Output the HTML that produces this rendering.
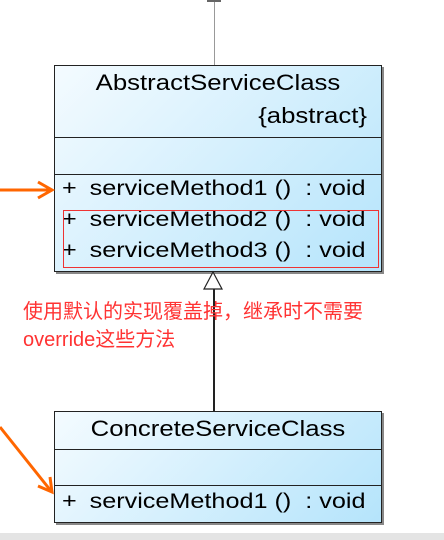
<!DOCTYPE html>
<html><head><meta charset="utf-8"><style>
body{margin:0;width:444px;height:540px;background:#fff;position:relative;overflow:hidden;font-family:"Liberation Sans",Arial,sans-serif}
.box{position:absolute;left:54px;width:326px;border:1px solid #222;background:linear-gradient(135deg,#f4fbff 0%,#b5e4fb 100%);box-shadow:2px 2px 0 #888}
.sec{border-top:1px solid #222;position:relative}
.t{position:absolute;font-size:22px;color:#000;white-space:nowrap;transform:scaleX(1.17)}
.m{position:absolute;left:7px;font-size:21px;white-space:nowrap;transform:scaleX(1.2);transform-origin:left}
.m b{font-weight:normal;display:inline-block;width:23px}
.note{position:absolute;left:23px;color:#f33;font-size:20px;font-family:"Liberation Sans","Noto Sans CJK SC",sans-serif;line-height:28px}
</style></head><body>
<div style="position:absolute;left:214px;top:0;width:1px;height:65px;background:#999"></div>
<div style="position:absolute;left:207px;top:0;width:14px;height:2px;background:#666"></div>
<div class="box" style="top:65px;height:205px">
 <div style="height:71px;position:relative">
  <div class="t" style="left:0;width:326px;text-align:center;top:4px">AbstractServiceClass</div>
  <div class="t" style="right:14px;top:37px;transform-origin:right">{abstract}</div>
 </div>
 <div class="sec" style="height:36px"></div>
 <div class="sec" style="height:96px">
  <div class="m" style="top:2px"><b>+</b>serviceMethod1 () &nbsp;: void</div>
  <div class="m" style="top:33px"><b>+</b>serviceMethod2 () &nbsp;: void</div>
  <div class="m" style="top:64px"><b>+</b>serviceMethod3 () &nbsp;: void</div>
  <div style="position:absolute;left:8px;top:35px;width:314px;height:56px;border:1px solid #e33"></div>
 </div>
</div>
<div style="position:absolute;left:213px;top:288px;width:1.5px;height:123px;background:#222"></div>
<svg style="position:absolute;left:0;top:0" width="444" height="540">
 <polygon points="213,272 204,289 222,289" fill="#fff" stroke="#222" stroke-width="1.2"/>
 <line x1="0" y1="190" x2="50" y2="190" stroke="#f60" stroke-width="3"/>
 <polyline points="38,182 52,190 38,198" fill="none" stroke="#f60" stroke-width="3"/>
 <line x1="0" y1="427" x2="51" y2="491" stroke="#f60" stroke-width="3"/>
 <polyline points="38,486 52,492 50,477" fill="none" stroke="#f60" stroke-width="3"/>
</svg>
<div class="note" style="top:298px">使用默认的实现覆盖掉，继承时不需要<br>override这些方法</div>
<div class="box" style="top:411px;height:110px">
 <div style="height:37px;position:relative"><div class="t" style="left:0;width:326px;text-align:center;top:4px">ConcreteServiceClass</div></div>
 <div class="sec" style="height:35px"></div>
 <div class="sec" style="height:36px"><div class="m" style="top:4px"><b>+</b>serviceMethod1 () &nbsp;: void</div></div>
</div>
<div style="position:absolute;left:0;top:533px;width:444px;height:7px;background:#e4e4e4"></div>
</body></html>
